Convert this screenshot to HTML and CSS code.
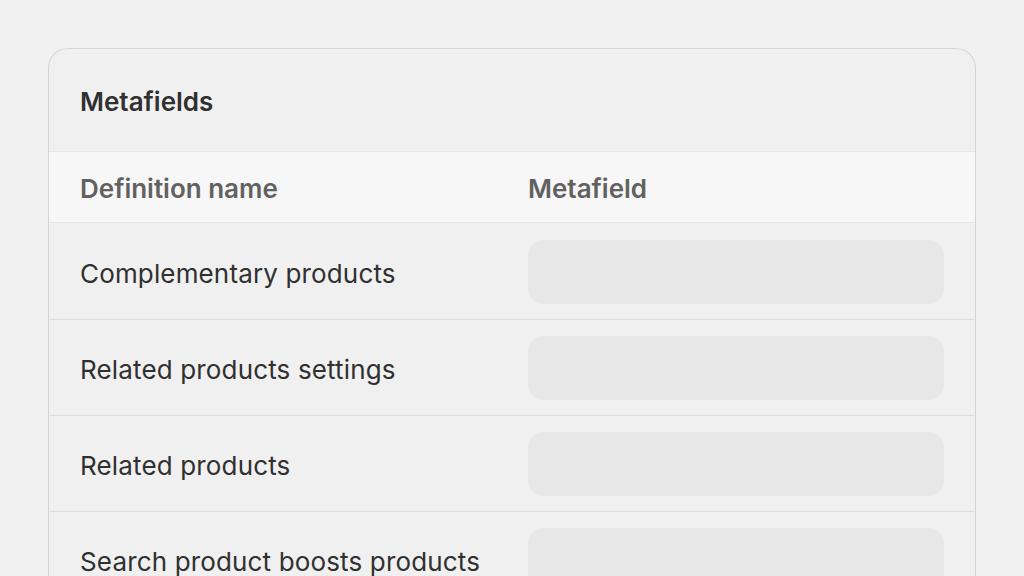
FILE: index.html
```html
<!DOCTYPE html>
<html lang="en">
<head>
<meta charset="utf-8">
<title>Metafields</title>
<link rel="stylesheet" href="styles.css">
</head>
<body>
<main class="page">
  <section class="card">
    <header class="card-header">
      <h2 class="card-title">Metafields</h2>
    </header>
    <div class="table">
      <div class="row head">
        <div class="cell">Definition name</div>
        <div class="cell">Metafield</div>
      </div>
      <div class="row">
        <div class="cell name">Complementary products</div>
        <div class="cell"><div class="field"></div></div>
      </div>
      <div class="row">
        <div class="cell name">Related products settings</div>
        <div class="cell"><div class="field"></div></div>
      </div>
      <div class="row">
        <div class="cell name">Related products</div>
        <div class="cell"><div class="field"></div></div>
      </div>
      <div class="row">
        <div class="cell name">Search product boosts products</div>
        <div class="cell"><div class="field"></div></div>
      </div>
    </div>
  </section>
</main>
</body>
</html>
```
FILE: styles.css
```css
* { box-sizing: border-box; }
html, body {
  margin: 0;
  padding: 0;
  background: #f1f1f1;
  font-family: Inter, "Noto Sans", sans-serif;
  color: #303030;
  overflow: hidden;
  height: 576px;
}
.page {
  padding: 48px 48px 0 48px;
}
.card {
  border: 1px solid #d4d4d4;
  border-bottom: none;
  border-radius: 20px 20px 0 0;
  background: #f0f0f0;
  overflow: hidden;
}
.card-header {
  padding: 4px 31px 0;
  height: 102px;
  display: flex;
  align-items: center;
}
.card-title {
  margin: 0;
  font-size: 26px;
  line-height: 36px;
  font-weight: 600;
  color: #303030;
}
.table {
  display: flex;
  flex-direction: column;
}
.row {
  display: grid;
  grid-template-columns: 1fr 1fr;
  column-gap: 32px;
  padding: 16px 31px 15px;
  border-top: 1px solid #dcdcdc;
  align-items: center;
  height: 96px;
}
.row.head {
  background: #f7f7f7;
  border-top: 1px solid #e6e6e6;
  border-bottom: 1px solid #e6e6e6;
  height: 72px;
  padding-top: 3px;
  padding-bottom: 0;
  font-weight: 600;
  color: #616161;
}
.row.head + .row {
  border-top: none;
  padding-top: 17px;
}
.cell {
  font-size: 26px;
  line-height: 32px;
}
.name {
  padding-top: 3px;
  font-weight: 400;
  letter-spacing: 0.15px;
}
.field {
  height: 64px;
  border-radius: 16px;
  background: #e7e7e7;
}
```
